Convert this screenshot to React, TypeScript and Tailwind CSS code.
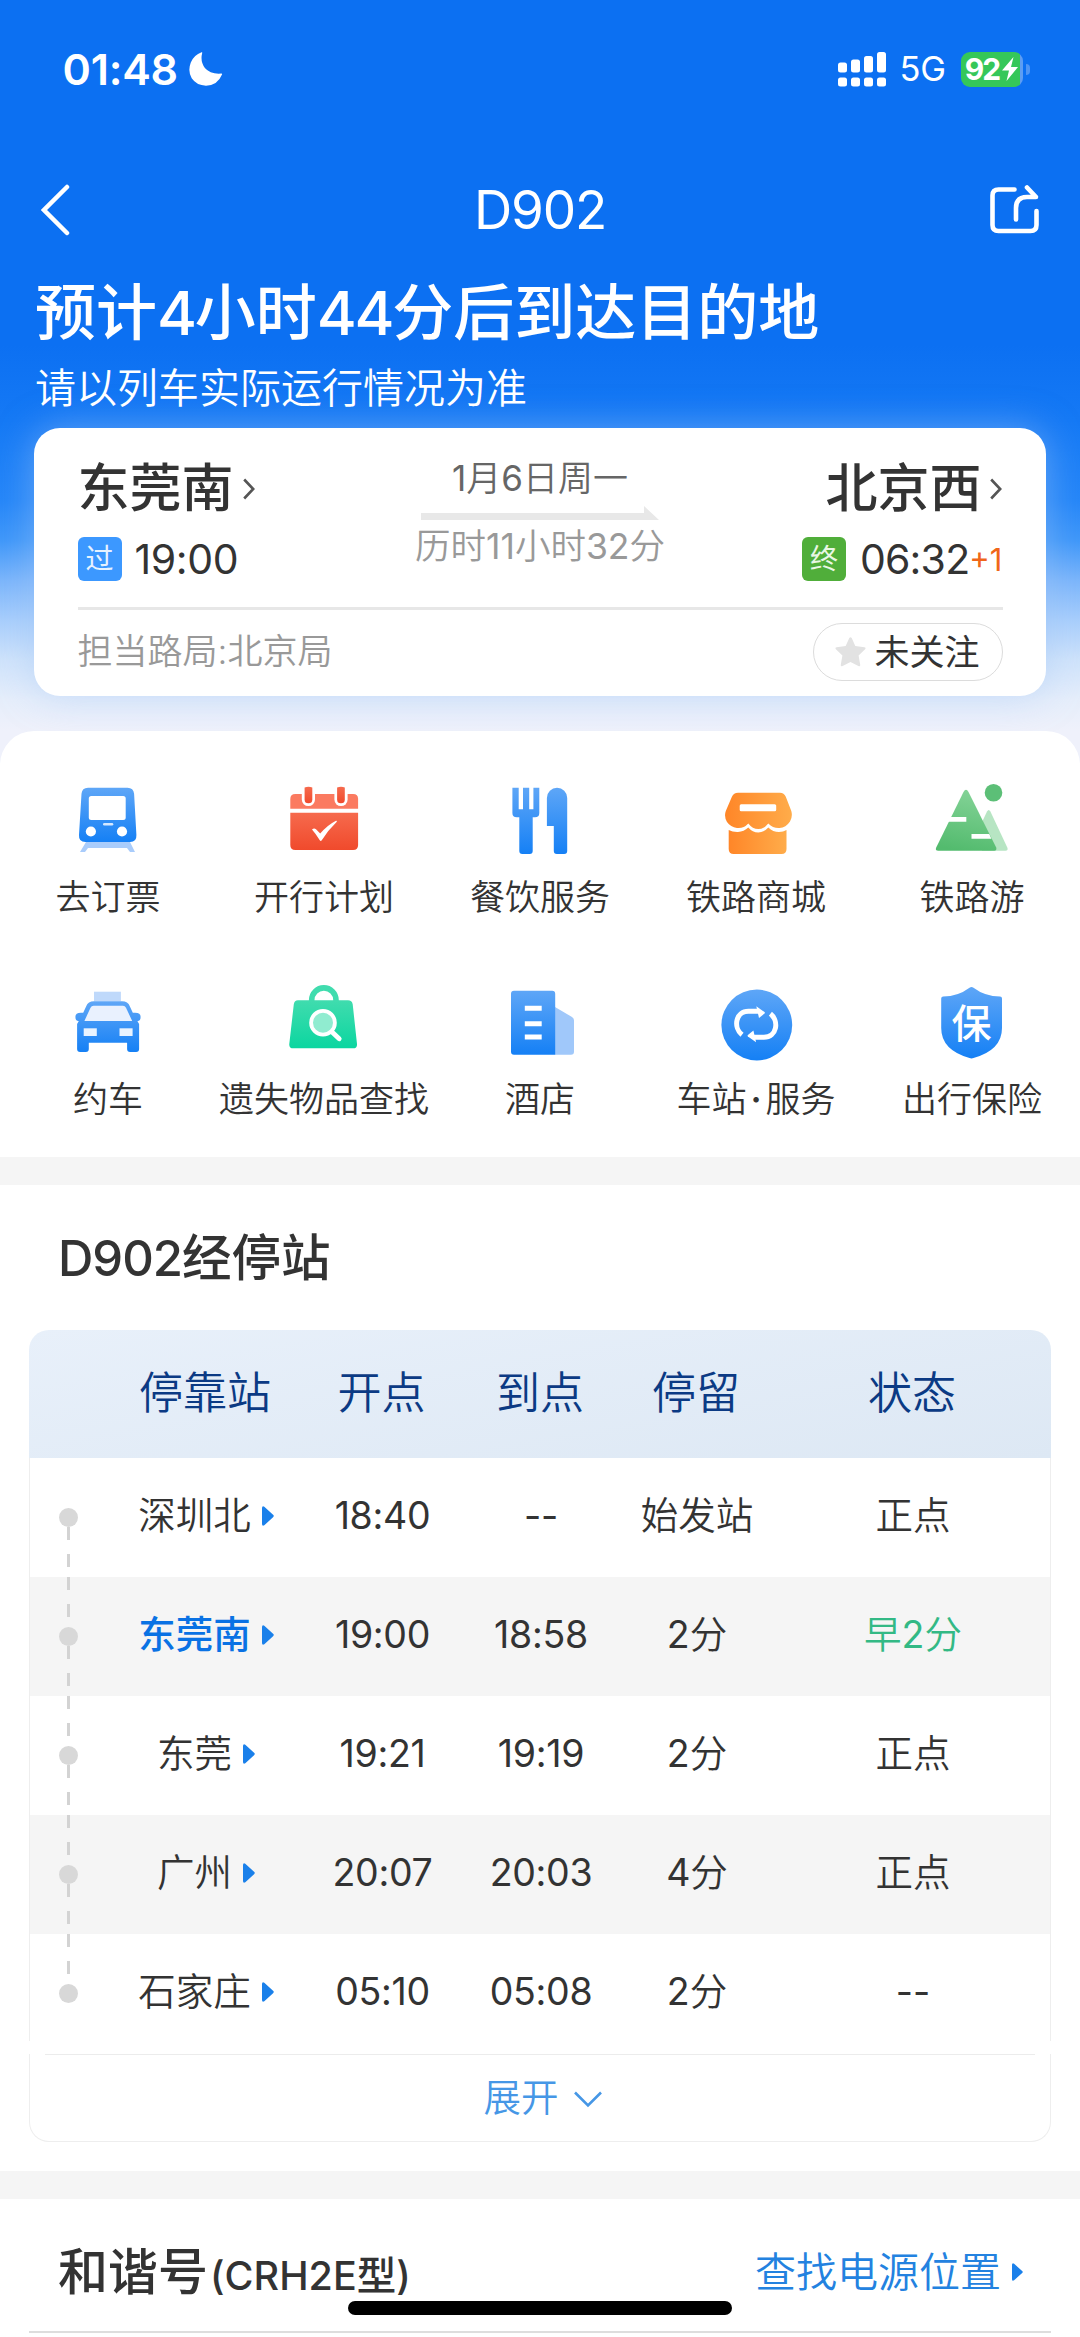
import React from 'react';
import clsx from 'clsx';

interface Service {
  id: string;
  label: React.ReactNode;
  icon: React.ReactNode;
}

interface Stop {
  station: string;
  depart: string;
  arrive: string;
  stay: string;
  status: string;
  current?: boolean;
  early?: boolean;
}

const TrainIcon = () => (
  <svg className="size-20" viewBox="0 0 80 80" fill="none">
    <path d="M18 62h44l5 10h-5l-3-4H20l-3 4h-5z" fill="#a9ccfb" />
    <path d="M20 7.7h39.5q6 0 6.6 6L68.4 55q.4 7-6.4 7H17.400q-6.800 0-6.400-7l2.500-41.300q.5-6 6.500-6z" fill="url(#blueV)" />
    <rect x="20.800" y="16" width="36.900" height="24" rx="2.500" fill="#fff" />
    <rect x="35" y="43" width="10.300" height="2.600" rx="1.300" fill="#d5e8ff" />
    <circle cx="22.900" cy="51.500" r="5.100" fill="#fff" />
    <circle cx="54" cy="51.500" r="5.100" fill="#fff" />
  </svg>
);

const CalendarIcon = () => (
  <svg className="size-20" viewBox="0 0 80 80" fill="none">
    <path d="M11.300 14h57.800q5 0 5 5v9.700H6.300V19q0-5 5-5z" fill="#fb7a60" />
    <path d="M6.300 32.700h67.800V65q0 5-5 5H11.300q-5 0-5-5z" fill="url(#redV)" />
    <path d="M17.800 6v13.500a6.600 6.600 0 0 0 13.200 0V6z" fill="#fff" />
    <path d="M50.400 6v13.500a6.600 6.600 0 0 0 13.200 0V6z" fill="#fff" />
    <path d="M20.600 7.500q4-1.600 7.700 0v12a3.850 3.850 0 0 1-7.700 0z" fill="url(#redV)" />
    <path d="M53.100 7.500q4-1.600 7.700 0v12a3.850 3.850 0 0 1-7.700 0z" fill="url(#redV)" />
    <path d="M28 49.500q2-1.800 4-.3l4.200 4.300Q43.500 45 52 40.700q1.500-.2.600 1.300-8.500 8-15 18.500-1 1-1.800-.2Q32 54 28 49.500z" fill="#fff" />
  </svg>
);

const DiningIcon = () => (
  <svg className="size-20" viewBox="0 0 80 80" fill="none">
    <path
      d="M12.400 7.700h6.300v21.600H23V7.700h6.200v21.600h4.200V7.700h5.900V33q0 4.300-4.300 4.300h-2.300V71q0 3-3 3h-7.400q-3 0-3-3V37.300h-2.500q-4.400 0-4.400-4.300z"
      fill="url(#blueV)"
    />
    <path d="M46.900 17.900a10.150 10.150 0 0 1 20.300 0V71q0 3-3 3h-7.400q-3 0-3-3V46h-6.900z" fill="url(#blueV)" />
  </svg>
);

const ShopIcon = () => (
  <svg className="size-20" viewBox="0 0 80 80" fill="none">
    <path
      d="M22 12.700h42q4 0 5.800 4L75.300 31q1.600 5.400-1.300 10.500Q70 47.500 63.500 48q-6.500.4-11.200-4.500-4.200 5.500-10 5.500t-10-5.500Q27.500 48.800 21 48q-6.500-.8-10-6Q7.800 36.500 9.800 31l6.100-14.300q1.800-4 6.100-4z"
      fill="url(#orangeH)"
    />
    <path
      d="M12.700 50q4 2.200 9.300 2 6-.4 10.300-4.500Q36.500 52.500 42.300 52.500t10-5Q57 52 63 52q4.300-.1 7.500-2v19q0 5-5 5H17.700q-5 0-5-5z"
      fill="url(#orangeH)"
    />
    <rect x="23.700" y="24.300" width="36.500" height="7" rx="1.500" fill="#fff" />
  </svg>
);

const MountainIcon = () => (
  <svg className="size-20" viewBox="0 0 80 80" fill="none">
    <path d="M55 31.500q1.700-3 3.400 0l17 36.200q1 3-2 3H50l-4-20z" fill="#b7e5c3" />
    <path d="M31.500 12q2.500-4.500 5 0L64.300 67.700q.6 3-2 3H6.300q-3.400 0-2.200-3z" fill="url(#greenD)" />
    <circle cx="61.500" cy="12.700" r="8.800" fill="#5cbf77" />
    <path d="M17.500 37h16.800v4.700H15.500z" fill="#fff" />
    <path d="M39.500 54h17.700l2.200 4.700H39.500z" fill="#fff" />
  </svg>
);

const TaxiIcon = () => (
  <svg className="size-20" viewBox="0 0 80 80" fill="none">
    <rect x="26" y="9.700" width="26.900" height="9.500" fill="#bfd9fb" />
    <path
      d="M26 19.300h28q6 0 7.800 5l3 6.500q7.800-1 7.800 4 0 4.500-3.200 4.300l1.700 3V67q0 3-3 3h-6q-3 0-3-3v-6.300H20.800V67q0 3-3 3h-5.700q-3 0-3-3V42.100l1.700-3q-3.400.2-3.400-4.300 0-5 7.800-4l3-6.500q1.800-5 7.800-5z"
      fill="url(#blueV)"
    />
    <path d="M25.500 23.700H55q2 0 3 2l6.200 13.300H16.400l6.100-13.300q1-2 3-2z" fill="#e9f1fe" />
    <rect x="15.700" y="46.300" width="13.100" height="7.700" fill="#e9f3ff" />
    <rect x="51.500" y="46.300" width="13.100" height="7.700" fill="#e9f3ff" />
  </svg>
);

const BagIcon = () => (
  <svg className="size-20" viewBox="0 0 80 80" fill="none">
    <path d="M27.700 20v-2a12.150 12.150 0 0 1 24.300 0v2" stroke="#40dcae" strokeWidth="5.600" />
    <path d="M14 18.300h50q4 0 4.700 4L73 62q.4 4.300-4 4.300H9.300q-4.400 0-4-4.300l4.500-39.700q.6-4 4.200-4z" fill="url(#mintV)" />
    <path d="M47.500 49.500l7.700 7.300" stroke="#fff" strokeWidth="4.800" strokeLinecap="round" />
    <circle cx="39" cy="40.700" r="11.900" fill="#90ecd0" stroke="#fff" strokeWidth="3.800" />
  </svg>
);

const HotelIcon = () => (
  <svg className="size-20" viewBox="0 0 80 80" fill="none">
    <path d="M55 25l17 10q2 1.200 2 3.300v31.400q0 3-3 3H55z" fill="#a0c8fa" />
    <path d="M14 8.700h38.200q3 0 3 3v61H14q-3 0-3-3v-58q0-3 3-3z" fill="url(#blueV)" />
    <path d="M24.800 26.200h16.900M24.800 41.700h16.900M24.800 55h16.900" stroke="#fff" strokeWidth="5" />
  </svg>
);

const StationServiceIcon = () => (
  <svg className="size-20" viewBox="0 0 80 80" fill="none">
    <circle cx="40.800" cy="43" r="35.400" fill="url(#blueV)" />
    <g stroke="#fff" strokeWidth="5">
      <path d="M26 52.800C17 45.500 19.500 29.300 32.500 29.300H43" />
      <path d="M54.400 31.800C63.400 39.100 60.900 55.300 47.900 55.300H37.400" />
    </g>
    <path d="M40.300 24.300l8.200 5.700q.8.800 0 1.600l-5.500 4.400z" fill="#fff" />
    <path d="M40.100 60.300l-8.200-5.700q-.8-.8 0-1.600l5.500-4.400z" fill="#fff" />
  </svg>
);

const InsuranceIcon = () => (
  <svg className="size-20" viewBox="0 0 80 80" fill="none">
    <path d="M37.500 5.800q2-1.400 4 0Q53 14.500 68 14.500q2 0 2 2V46q0 22-28.500 30-2 .8-4 0Q9.200 68 9.200 46V16.500q0-2 2-2Q26 14.500 37.500 5.800z" fill="url(#blueV)" />
    <text x="39.500" y="56" textAnchor="middle" fontSize="40" fontWeight="500" fill="#fff">
      保
    </text>
  </svg>
);

const services: Service[] = [
  { id: 'ticket', label: '去订票', icon: <TrainIcon /> },
  { id: 'plan', label: '开行计划', icon: <CalendarIcon /> },
  { id: 'dining', label: '餐饮服务', icon: <DiningIcon /> },
  { id: 'shop', label: '铁路商城', icon: <ShopIcon /> },
  { id: 'travel', label: '铁路游', icon: <MountainIcon /> },
  { id: 'taxi', label: '约车', icon: <TaxiIcon /> },
  { id: 'lost', label: '遗失物品查找', icon: <BagIcon /> },
  { id: 'hotel', label: '酒店', icon: <HotelIcon /> },
  {
    id: 'station',
    label: (
      <>
        车站<span className="mx-[4px] font-semibold">·</span>服务
      </>
    ),
    icon: <StationServiceIcon />,
  },
  { id: 'insurance', label: '出行保险', icon: <InsuranceIcon /> },
];

const stops: Stop[] = [
  { station: '深圳北', depart: '18:40', arrive: '--', stay: '始发站', status: '正点' },
  { station: '东莞南', depart: '19:00', arrive: '18:58', stay: '2分', status: '早2分', current: true, early: true },
  { station: '东莞', depart: '19:21', arrive: '19:19', stay: '2分', status: '正点' },
  { station: '广州', depart: '20:07', arrive: '20:03', stay: '4分', status: '正点' },
  { station: '石家庄', depart: '05:10', arrive: '05:08', stay: '2分', status: '--' },
];

// Light Chinese text with regular weight digits and dashes
const LightText = ({ text }: { text: string }) => (
  <span className="font-[350]">
    {text.split(/([\d-]+)/).map((part, index) => (
      <span key={index} className={clsx(index % 2 === 1 && 'font-normal')}>
        {part}
      </span>
    ))}
  </span>
);

// Shared gradients for the service icons
const IconGradients = () => (
  <svg className="absolute size-0">
    <defs>
      <linearGradient id="blueV" x1="0" y1="0" x2="0" y2="1">
        <stop offset="0" stopColor="#5ea6f7" />
        <stop offset="1" stopColor="#1580f5" />
      </linearGradient>
      <linearGradient id="redV" x1="0" y1="0" x2="0" y2="1">
        <stop offset="0" stopColor="#f66a4d" />
        <stop offset="1" stopColor="#f04a2c" />
      </linearGradient>
      <linearGradient id="orangeH" x1="0" y1="0" x2="1" y2="0">
        <stop offset="0" stopColor="#ff8628" />
        <stop offset="1" stopColor="#ffac4a" />
      </linearGradient>
      <linearGradient id="greenD" x1="0.600" y1="0" x2="0.400" y2="1">
        <stop offset="0" stopColor="#84d397" />
        <stop offset="1" stopColor="#53bb6e" />
      </linearGradient>
      <linearGradient id="mintV" x1="0" y1="0" x2="0" y2="1">
        <stop offset="0" stopColor="#40dcae" />
        <stop offset="1" stopColor="#0bd6a0" />
      </linearGradient>
    </defs>
  </svg>
);

const StatusBar = () => (
  <div className="flex h-[138px] items-center justify-between pl-[62.500px] pr-[50.500px] text-white">
    <div className="flex items-center gap-[11px]">
      <span className="text-[43px] font-semibold leading-none tracking-[-0.2px]">01:48</span>
      <svg className="h-[34px] w-[34px]" viewBox="0 0 34 34" fill="#fff">
        <path d="M12.500.3q.9-.4.700.6-2.200 8.500 2.700 15.100 5.500 6.500 16.300 5.600 1.300-.2.800 1Q28.500 33.700 17 33.700 7.500 33.500 2.700 26.300-1.500 19 1.800 10.500 5 3 12.500.3z" />
      </svg>
    </div>
    <div className="flex items-center">
      <svg className="h-[35px] w-[48px]" viewBox="0 0 48 35" fill="#fff">
        <rect x="0" y="10.500" width="9" height="10" rx="2.500" />
        <rect x="13" y="7.500" width="9" height="13" rx="2.500" />
        <rect x="26" y="4" width="9" height="16.500" rx="2.500" />
        <rect x="39" y="0" width="9" height="20.500" rx="2.500" />
        <rect x="0" y="25.500" width="9" height="9" rx="2.500" />
        <rect x="13" y="25.500" width="9" height="9" rx="2.500" />
        <rect x="26" y="25.500" width="9" height="9" rx="2.500" />
        <rect x="39" y="25.500" width="9" height="9" rx="2.500" />
      </svg>
      <span className="ml-[14px] w-[61px] text-[34.500px] leading-none tracking-[-0.300px]">5G</span>
      <div className="flex h-[35px] w-[62px] items-center justify-center rounded-[9px] bg-[linear-gradient(90deg,#35c759_95%,#5d9df3_95%)]">
        <span className="text-[30px] font-bold leading-none tracking-[-2px]">92</span>
        <svg className="ml-[3px] h-[24px] w-[16px]" viewBox="0 0 16 24" fill="#fff">
          <path d="M11.500 0L0 13.500h7L4.500 24 16 10H9z" />
        </svg>
      </div>
      <div className="ml-[3px] h-[11px] w-[4px] rounded-r-full bg-[#4f95f5]" />
    </div>
  </div>
);

const ChevronRight = () => (
  <svg className="h-[22px] w-[12px]" viewBox="0 0 12 22" fill="none" stroke="#555" strokeWidth="2.600">
    <path d="M1.200 1.500l9 9.500-9 9.500" />
  </svg>
);

const Triangle = ({ className }: { className?: string }) => (
  <svg className={clsx('shrink-0', className)} viewBox="0 0 13 20" preserveAspectRatio="none" fill="#1a80ea">
    <path d="M0 2Q.2-.6 2.500.8L12 8.800q1.500 1.200 0 2.400l-9.500 8Q.2 20.600 0 18z" />
  </svg>
);

const TripCard = () => (
  <div className="mx-[34px] flex h-[268px] flex-col rounded-[26px] bg-white px-[43.500px] shadow-[0_0_36px_rgba(165,200,248,0.5)]">
    <div className="flex h-[179px] justify-between">
      <div className="flex w-[250px] flex-col pt-[31px]">
        <div className="flex h-[60px] items-center gap-[9px]">
          <span className="text-[52px] font-medium leading-none text-[#333]">东莞南</span>
          <ChevronRight />
        </div>
        <div className="mt-[18px] flex h-[44px] items-center">
          <span className="flex size-[44px] items-center justify-center rounded-[6px] bg-[#3c98ff] text-[28px] leading-none text-[#e6f2ff]">过</span>
          <span className="ml-[13px] text-[41px] leading-none tracking-[-0.400px] text-[#333]">19:00</span>
        </div>
      </div>
      <div className="flex flex-col items-center pt-[28px]">
        <span className="text-[35px] leading-[44px] text-[#666]">
          <LightText text="1月6日周一" />
        </span>
        <svg className="mt-[6px] h-[14px] w-[238px]" viewBox="0 0 238 14" fill="#e8e8e8">
          <path d="M0 7h223V0l15 14H0z" />
        </svg>
        <span className="mt-[5px] text-[35.500px] leading-[44px] text-[#999]">
          <LightText text="历时11小时32分" />
        </span>
      </div>
      <div className="flex w-[250px] flex-col items-end pt-[31px]">
        <div className="flex h-[60px] items-center gap-[9px]">
          <span className="text-[52px] font-medium leading-none text-[#333]">北京西</span>
          <ChevronRight />
        </div>
        <div className="mt-[18px] flex h-[44px] items-center">
          <span className="flex size-[44px] items-center justify-center rounded-[6px] bg-[#50ae3a] text-[28px] leading-none text-[#e9f7e5]">终</span>
          <span className="ml-[14px] text-[41px] leading-none tracking-[-0.800px] text-[#333]">06:32</span>
          <span className="text-[31px] leading-none text-[#f0661a]">+1</span>
        </div>
      </div>
    </div>
    <div className="h-[3px] bg-[#e7e7e7]" />
    <div className="mt-[13px] flex h-[58px] items-center justify-between">
      <span className="pb-[2px] text-[35px] font-[350] leading-none text-[#999]">担当路局:北京局</span>
      <div className="flex h-[58px] w-[190px] items-center rounded-full border-[1.500px] border-[#dcdcdc] pl-[21px]">
        <svg className="h-[30px] w-[31px]" viewBox="0 0 31 30" fill="#e2e2e2">
          <path d="M14.300 1q1.200-1.600 2.400 0l3.600 8 9 1.200q2 .4.800 2l-6.500 6.300 1.600 9.300q.2 2-1.800 1.200L15.500 25l-7.900 4q-2 .8-1.800-1.200l1.600-9.300L.900 12.200q-1.200-1.600.8-2l9-1.200z" />
        </svg>
        <span className="ml-[9px] text-[35px] leading-none text-[#333]">未关注</span>
      </div>
    </div>
  </div>
);

const GRID = 'grid grid-cols-[87px_178px_175px_142px_170px_262px]';

const Timeline = ({ first, last }: { first: boolean; last: boolean }) => {
  const dash = 'h-[13px] w-[2.500px] bg-[#d3d3d3]';
  return (
    <div className="-mb-[3px] flex h-[119px] w-[77px] flex-col items-center self-start">
      <div className={clsx('flex h-[50px] flex-col gap-[14px]', first && 'invisible')}>
        <div className={dash} />
        <div className={dash} />
      </div>
      <div className="size-[19px] rounded-full bg-[#d8d8d8]" />
      <div className={clsx('flex flex-col gap-[14px]', last && 'invisible')}>
        <div className={dash} />
        <div className={dash} />
      </div>
    </div>
  );
};

const StopsTable = () => (
  <div className="mx-[29px]">
    <div className={clsx(GRID, 'h-[128px] items-center rounded-t-[20px] bg-[linear-gradient(170deg,#e8f0fa,#dde8f4)] pb-[2px] text-center text-[44px] font-[350] leading-none text-[#0b3a84]')}>
      <span />
      <span>停靠站</span>
      <span>开点</span>
      <span>到点</span>
      <span>停留</span>
      <span>状态</span>
    </div>
    <div className="h-[583px] border-x-[1.500px] border-[#eeeeee]">
      {stops.map((stop, index) => (
        <div
          key={stop.station}
          className={clsx(GRID, 'h-[119px] items-center pb-[3px] text-center text-[37.500px] leading-none text-[#333]', index % 2 === 1 && 'bg-[#f5f5f5]')}
        >
          <Timeline first={index === 0} last={index === stops.length - 1} />
          <span className="flex items-center justify-center gap-[11px]">
            <span className={stop.current ? 'font-medium text-[#0a72e4]' : 'font-[350]'}>{stop.station}</span>
            <Triangle className="h-[20px] w-[12px]" />
          </span>
          <span className="tracking-[-0.300px]">{stop.depart}</span>
          <span className="tracking-[-0.300px]">{stop.arrive}</span>
          <LightText text={stop.stay} />
          <span className={clsx(stop.early && 'text-[#33b985]')}>
            <LightText text={stop.status} />
          </span>
        </div>
      ))}
    </div>
    <div className="mt-[13px] h-[88px] rounded-b-[20px] border-x-[1.500px] border-b-[1.500px] border-[#eeeeee]">
      <div className="mx-[15px] h-px bg-[#ececec]" />
      <div className="flex h-[86px] items-center justify-center gap-[15px] pl-[5px]">
        <span className="text-[37.500px] font-[350] leading-none text-[#4697e6]">展开</span>
        <svg className="mt-[2px] h-[17px] w-[28px]" viewBox="0 0 28 17" fill="none" stroke="#4697e6" strokeWidth="2.600">
          <path d="M1 1.500L14 14.500 27 1.500" />
        </svg>
      </div>
    </div>
  </div>
);

export default function App() {
  return (
    <div className="relative h-[2337px] w-[1080px] overflow-hidden bg-white font-[Inter,'Noto_Sans_CJK_SC',sans-serif]">
      <IconGradients />
      <div className="h-[770px] bg-[linear-gradient(180deg,#0c70f2_0px,#0c70f2_345px,#1579f5_420px,#2586f8_500px,#3f97f9_540px,#7bb5fb_580px,#a8cefc_620px,#cfe3fb_660px,#e6eefb_700px,#eff1fb_731px)]">
        <StatusBar />
        <div className="flex h-[143px] items-center justify-between pl-[41px] pr-[41px] text-white">
          <svg className="h-[52px] w-[49px]" viewBox="0 0 49 52" fill="none" stroke="#fff" strokeWidth="4.500" strokeLinecap="round">
            <path d="M26 3L3 26l23 23" />
          </svg>
          <h1 className="pt-[2px] text-[53px] font-normal leading-none tracking-[-1.200px]">D902</h1>
          <svg className="h-[50px] w-[49px]" viewBox="0 0 49 50" fill="none" stroke="#fff" strokeWidth="4.600" strokeLinecap="round" strokeLinejoin="round">
            <path d="M24.500 4.500H8.500q-6 0-6 6v29.500q0 6 6 6h32q6 0 6-6V26" />
            <path d="M26 34.500V23q0-11 11-11h9l-9-9.500" />
          </svg>
        </div>
        <div className="px-[35px] text-white">
          <p className="pt-[1px] text-[61px] font-medium leading-[62px]">
            预计<span className="tracking-[-2.300px]">4</span>小时<span className="tracking-[-2.300px]">44</span>分后到达目的地
          </p>
          <p className="mt-[19px] text-[41px] font-[350] leading-[50px]">请以列车实际运行情况为准</p>
        </div>
        <div className="pt-[15px]">
          <TripCard />
        </div>
      </div>

      <div className="relative -mt-[39px] h-[426px] rounded-t-[34px] bg-white">
        <div className="grid grid-cols-5 gap-y-[58px] pt-[49px]">
          {services.map((service) => (
            <div key={service.id} className="flex h-[144px] flex-col items-center justify-between">
              {service.icon}
              <span className="whitespace-nowrap text-[35px] font-[350] leading-[54px] text-[#333]">{service.label}</span>
            </div>
          ))}
        </div>
      </div>
      <div className="h-[28px] bg-[#f5f5f5]" />

      <section className="h-[986px]">
        <h2 className="pl-[58px] pt-[43px] text-[49.500px] font-medium leading-[60px] text-[#333]">
          <span className="text-[49px] tracking-[-1px]">D902</span>经停站
        </h2>
        <div className="pt-[41px]">
          <StopsTable />
        </div>
      </section>
      <div className="h-[28px] bg-[#f5f5f5]" />

      <section>
        <div className="mx-[29px] flex h-[134px] items-center justify-between border-b-[2px] border-[#dddddd] pl-[29px] pr-[28px] pt-[14px]">
          <div className="text-[#333]">
            <span className="text-[50px] font-medium leading-none">和谐号</span>
            <span className="ml-[2px] text-[39.500px] font-medium leading-none">(CRH2E型)</span>
          </div>
          <div className="flex items-center gap-[11px]">
            <span className="text-[41px] font-[350] leading-none text-[#2382e0]">查找电源位置</span>
            <Triangle className="h-[18px] w-[11px]" />
          </div>
        </div>
      </section>
      <div className="absolute bottom-[22px] left-[348px] h-[14px] w-[384px] rounded-full bg-black" />
    </div>
  );
}
